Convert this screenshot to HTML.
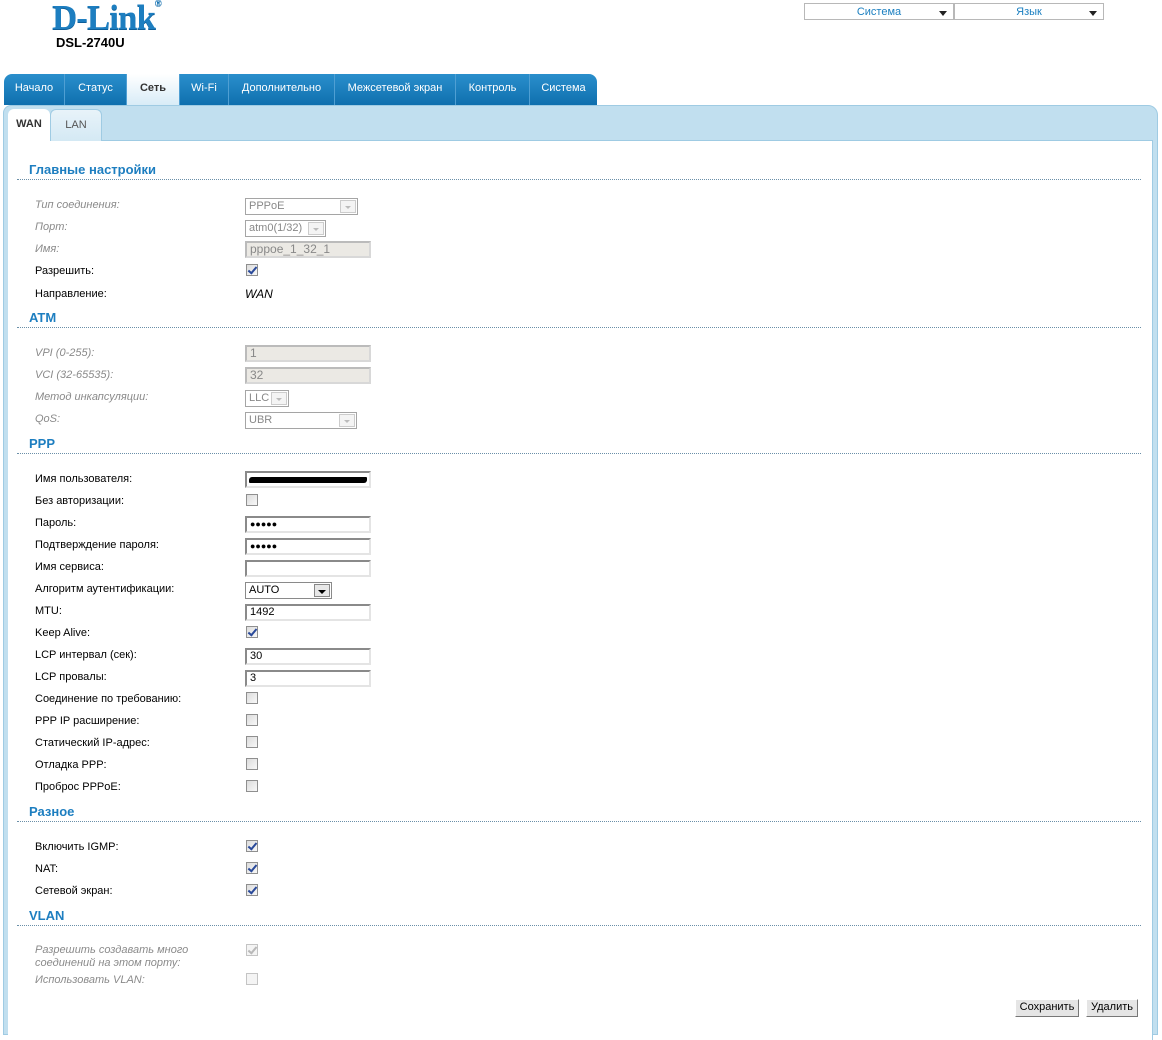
<!DOCTYPE html>
<html><head><meta charset="utf-8"><style>
*{margin:0;padding:0;box-sizing:border-box}
body{width:1162px;height:1024px;background:#fff;font-family:"Liberation Sans",sans-serif;font-size:11px;color:#000;position:relative;overflow:hidden}
.a{position:absolute}
.logo{left:52px;top:-2px;font-family:"Liberation Serif",serif;font-weight:bold;font-size:35px;color:#1d7ec0;letter-spacing:-1px;text-shadow:0 1px 0 #0d5e99}
.model{left:56px;top:35px;font-weight:bold;font-size:13px}
.dd{top:3px;height:17px;border:1px solid #b8b8b8;color:#1b7fc0;font-size:11px;text-align:center;line-height:17px}
.dd i{position:absolute;right:6px;top:7px;width:0;height:0;border-left:4px solid transparent;border-right:4px solid transparent;border-top:5px solid #222}
.tabs{left:4px;top:74px;height:31px;width:593px;background:linear-gradient(#2a8fcc,#0f6fae);border-radius:8px 8px 0 0}
.tab{top:74px;height:31px;color:#fff;font-size:11px;line-height:29px;text-align:center;border-right:1px solid #4f9fd3}
.tab.on{background:linear-gradient(#fff,#d8ecf7);color:#333;font-weight:bold}
.panel{left:3px;top:105px;width:1155px;height:930px;background:#c1dfef;border:1px solid #9fcbe3;border-radius:8px 10px 0 0}
.content{left:8px;top:140px;width:1145px;height:900px;background:#fff;border-top:1px solid #9fcbe3;border-right:1px solid #9fcbe3}
.st{top:109px;height:32px;font-size:11px;line-height:30px;text-align:center;border-radius:6px 6px 0 0}
.h{left:29px;font-weight:bold;font-size:13px;color:#1d7ec0}
.ln{left:17px;width:1124px;border-top:1px dotted #6a8fa8}
.l{left:35px;line-height:14px;white-space:nowrap;margin-top:1px}
.g{color:#8a8a8a;font-style:italic}
.cb{left:246px;width:12px;height:12px;border:1px solid #8f8f8f;background:linear-gradient(135deg,#dcdcdc,#f8f8f8)}
.cb.c::after{content:"";position:absolute;left:3px;top:0px;width:3px;height:7px;border-right:2px solid #2a4a9a;border-bottom:2px solid #2a4a9a;transform:rotate(40deg)}
.cb.d{border-color:#c4c4c4;background:#f4f4f4}
.cb.d.c::after{border-color:#b8b8b8}
.in{left:245px;width:126px;height:17px;border:2px solid #e4e4e4;border-top-color:#8a8a8a;border-left-color:#8a8a8a;padding-left:3px;font-size:11px;line-height:13px;color:#000}
.in.dis{background:#ebe9e4;border-color:#d8d8d8;border-top-color:#bbb;border-left-color:#bbb;color:#888;font-size:12px}
.sel{left:245px;height:17px;border:1px solid #a5a5a5;padding-left:3px;font-size:11px;line-height:15px;color:#888}
.sel i{position:absolute;right:1px;top:1px;width:16px;height:13px;border:1px solid #ccc;background:#f4f4f4}
.sel i::after{content:"";position:absolute;left:4px;top:5px;border-left:3px solid transparent;border-right:3px solid transparent;border-top:3px solid #bbb}
.sel.en{color:#000;border-color:#8a8a8a}
.sel.en i{border-color:#888;background:#e8e8e8}
.sel.en i::after{border-top-color:#000;border-left-width:4px;border-right-width:4px;border-top-width:4px;left:3px}
.btn{top:999px;height:18px;background:#e5e5e5;border:1px solid #fff;border-right-color:#777;border-bottom-color:#777;font-size:11px;line-height:15px;text-align:center}
</style></head><body>
<div class="a logo">D-Link<span style="font-size:9px;vertical-align:top;font-family:'Liberation Sans';font-weight:normal">®</span></div>
<div class="a model">DSL-2740U</div>
<div class="a dd" style="left:804px;width:150px">Система<i></i></div>
<div class="a dd" style="left:954px;width:150px">Язык<i></i></div>

<div class="a panel"></div>
<div class="a tabs"></div>
<div class="a tab" style="left:4px;width:61px">Начало</div>
<div class="a tab" style="left:65px;width:62px">Статус</div>
<div class="a tab on" style="left:127px;width:53px">Сеть</div>
<div class="a tab" style="left:180px;width:49px">Wi-Fi</div>
<div class="a tab" style="left:229px;width:106px">Дополнительно</div>
<div class="a tab" style="left:335px;width:121px">Межсетевой экран</div>
<div class="a tab" style="left:456px;width:74px">Контроль</div>
<div class="a tab" style="left:530px;width:67px;border-right:none">Система</div>

<div class="a content"></div>
<div class="a st" style="left:8px;width:42px;background:#fff;font-weight:bold;color:#333">WAN</div>
<div class="a st" style="left:50px;width:52px;background:linear-gradient(#e8f3f9,#d4e9f4);border:1px solid #9fcbe3;border-bottom:none;color:#555">LAN</div>

<div class="a h" style="top:162px">Главные настройки</div><div class="a ln" style="top:179px"></div>
<div class="a l g" style="top:197px">Тип соединения:</div><div class="a sel" style="top:198px;width:113px">PPPoE<i></i></div>
<div class="a l g" style="top:219px">Порт:</div><div class="a sel" style="top:220px;width:81px">atm0(1/32)<i></i></div>
<div class="a l g" style="top:241px">Имя:</div><div class="a in dis" style="top:241px">pppoe_1_32_1</div>
<div class="a l" style="top:263px">Разрешить:</div><div class="a cb c" style="top:264px"></div>
<div class="a l" style="top:286px">Направление:</div><div class="a" style="left:245px;top:287px;font-style:italic;font-size:12px">WAN</div>

<div class="a h" style="top:310px">ATM</div><div class="a ln" style="top:327px"></div>
<div class="a l g" style="top:345px">VPI (0-255):</div><div class="a in dis" style="top:345px">1</div>
<div class="a l g" style="top:367px">VCI (32-65535):</div><div class="a in dis" style="top:367px">32</div>
<div class="a l g" style="top:389px">Метод инкапсуляции:</div><div class="a sel" style="top:390px;width:44px">LLC<i></i></div>
<div class="a l g" style="top:411px">QoS:</div><div class="a sel" style="top:412px;width:112px">UBR<i></i></div>

<div class="a h" style="top:436px">PPP</div><div class="a ln" style="top:453px"></div>
<div class="a l" style="top:471px">Имя пользователя:</div><div class="a in" style="top:471px"><div style="position:absolute;left:2px;top:4px;width:118px;height:6px;background:#000;border-radius:3px 1px 3px 1px"></div></div>
<div class="a l" style="top:493px">Без авторизации:</div><div class="a cb" style="top:494px"></div>
<div class="a l" style="top:515px">Пароль:</div><div class="a in" style="top:516px;font-size:9px">●●●●●</div>
<div class="a l" style="top:537px">Подтверждение пароля:</div><div class="a in" style="top:538px;font-size:9px">●●●●●</div>
<div class="a l" style="top:559px">Имя сервиса:</div><div class="a in" style="top:560px"></div>
<div class="a l" style="top:581px">Алгоритм аутентификации:</div><div class="a sel en" style="top:582px;width:87px">AUTO<i></i></div>
<div class="a l" style="top:603px">MTU:</div><div class="a in" style="top:604px">1492</div>
<div class="a l" style="top:625px">Keep Alive:</div><div class="a cb c" style="top:626px"></div>
<div class="a l" style="top:647px">LCP интервал (сек):</div><div class="a in" style="top:648px">30</div>
<div class="a l" style="top:669px">LCP провалы:</div><div class="a in" style="top:670px">3</div>
<div class="a l" style="top:691px">Соединение по требованию:</div><div class="a cb" style="top:692px"></div>
<div class="a l" style="top:713px">PPP IP расширение:</div><div class="a cb" style="top:714px"></div>
<div class="a l" style="top:735px">Статический IP-адрес:</div><div class="a cb" style="top:736px"></div>
<div class="a l" style="top:757px">Отладка PPP:</div><div class="a cb" style="top:758px"></div>
<div class="a l" style="top:779px">Проброс PPPoE:</div><div class="a cb" style="top:780px"></div>

<div class="a h" style="top:804px">Разное</div><div class="a ln" style="top:821px"></div>
<div class="a l" style="top:839px">Включить IGMP:</div><div class="a cb c" style="top:840px"></div>
<div class="a l" style="top:861px">NAT:</div><div class="a cb c" style="top:862px"></div>
<div class="a l" style="top:883px">Сетевой экран:</div><div class="a cb c" style="top:884px"></div>

<div class="a h" style="top:908px">VLAN</div><div class="a ln" style="top:925px"></div>
<div class="a l g" style="top:943px;line-height:13px">Разрешить создавать много<br>соединений на этом порту:</div><div class="a cb d c" style="top:944px"></div>
<div class="a l g" style="top:972px">Использовать VLAN:</div><div class="a cb d" style="top:973px"></div>

<div class="a btn" style="left:1015px;width:64px">Сохранить</div>
<div class="a btn" style="left:1086px;width:52px">Удалить</div>
</body></html>
